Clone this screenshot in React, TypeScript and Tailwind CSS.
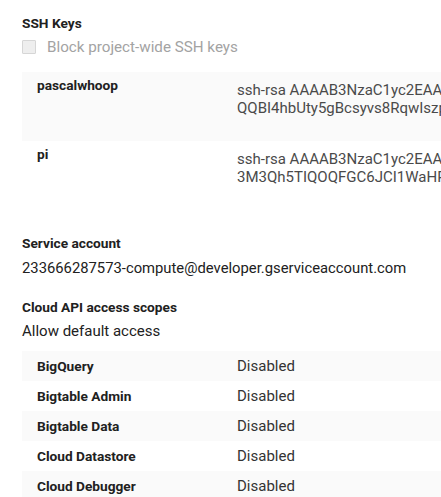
import React from 'react';

const sshKeys = [
    {
        user: 'pascalwhoop',
        lines: [
            'ssh-rsa AAAAB3NzaC1yc2EAAAADAQABAAABAQDc7kP2vR9xLm4tYwZ',
            'QQBI4hbUty5gBcsyvs8RqwIszpL0eN3fXk8sT1uHjWq9aVbR2cYdM',
        ],
    },
    {
        user: 'pi',
        lines: [
            'ssh-rsa AAAAB3NzaC1yc2EAAAADAQABAAABAQCz4mN8pQ1rS6tUvW',
            '3M3Qh5TIQOQFGC6JCI1WaHRk7LdPx2oYe9FgT4hJ0nKqZ5bVuX',
        ],
    },
];

const scopes = ['BigQuery', 'Bigtable Admin', 'Bigtable Data', 'Cloud Datastore', 'Cloud Debugger'];

export default function App() {
    return (
        <div className="w-[441px] h-[497px] overflow-hidden bg-white pl-[22px] pt-[14px] font-['Roboto',sans-serif] text-[#212121]">
            <h3 className="text-[13.7px] font-bold leading-[18px]">SSH Keys</h3>

            <label className="mt-[5px] flex items-center gap-[11px]">
                <span className="w-[14px] h-[14px] border border-[#d6d6d6] bg-[#eeeeee] rounded-[1px]" />
                <span className="text-[15.2px] leading-[20px] text-[#a3a3a3]">Block project-wide SSH keys</span>
            </label>

            <div className="mt-[15px] w-[419px] overflow-hidden">
                {sshKeys.map((k, i) => (
                    <div key={k.user} className={`flex h-[69px] ${i % 2 === 0 ? 'bg-[#fafafa]' : 'bg-white'}`}>
                        <div className="w-[215px] shrink-0 pl-[15px] pt-[5px] text-[13.7px] font-bold leading-[16px]">{k.user}</div>
                        <div className="pt-[9px] text-[15px] leading-[18px] text-[#4a4a4a] whitespace-nowrap">
                            {k.lines.map(l => <div key={l}>{l}</div>)}
                        </div>
                    </div>
                ))}
            </div>

            <div className="mt-[24px]">
                <h3 className="text-[13.7px] font-bold leading-[18px]">Service account</h3>
                <p className="mt-[6px] text-[14.8px] leading-[20px] whitespace-nowrap">233666287573-compute@developer.gserviceaccount.com</p>
            </div>

            <div className="mt-[20px]">
                <h3 className="text-[13.7px] font-bold leading-[18px]">Cloud API access scopes</h3>
                <p className="mt-[5px] text-[15px] leading-[20px]">Allow default access</p>
            </div>

            <div className="mt-[10px] w-[419px]">
                {scopes.map((s, i) => (
                    <div key={s} className={`flex items-center h-[30px] ${i % 2 === 0 ? 'bg-[#fafafa]' : 'bg-white'}`}>
                        <div className="w-[215px] shrink-0 pl-[15px] text-[13.7px] font-bold">{s}</div>
                        <div className="text-[15px] text-[#333]">Disabled</div>
                    </div>
                ))}
            </div>
        </div>
    );
}
